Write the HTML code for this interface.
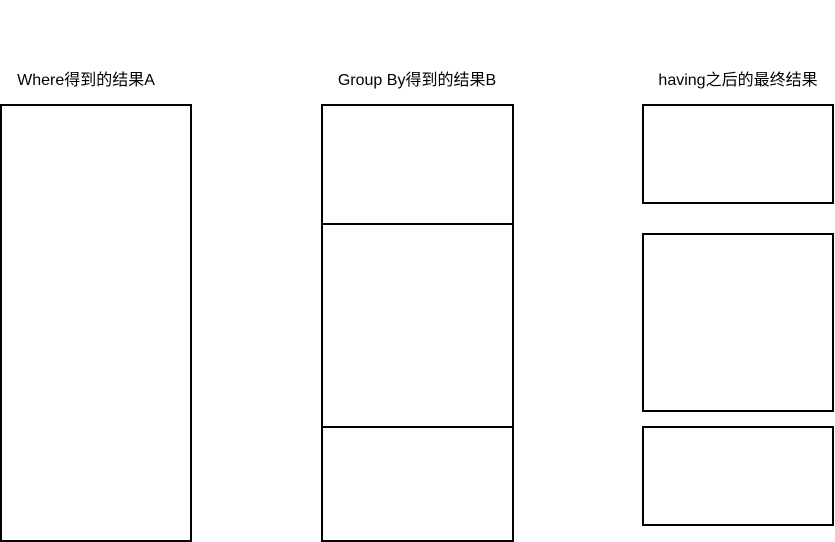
<!DOCTYPE html>
<html><head><meta charset="utf-8"><style>
html,body{margin:0;padding:0;background:#fff;width:835px;height:542px;overflow:hidden}
text{font-family:"Liberation Sans","Noto Sans CJK SC",sans-serif;font-size:16px;fill:#000}
</style></head><body>
<svg width="835" height="542" xmlns="http://www.w3.org/2000/svg">
<g fill="none" stroke="#000" stroke-width="2">
<rect x="1" y="105" width="190" height="436"/>
<rect x="322" y="105" width="191" height="436"/>
<line x1="322" y1="224" x2="513" y2="224"/>
<line x1="322" y1="427" x2="513" y2="427"/>
<rect x="643" y="105" width="190" height="98"/>
<rect x="643" y="234" width="190" height="177"/>
<rect x="643" y="427" width="190" height="98"/>
</g>
<text x="86" y="85" text-anchor="middle">Where得到的结果A</text>
<text x="417" y="85" text-anchor="middle">Group By得到的结果B</text>
<text x="738" y="85" text-anchor="middle">having之后的最终结果</text>
</svg>
</body></html>
